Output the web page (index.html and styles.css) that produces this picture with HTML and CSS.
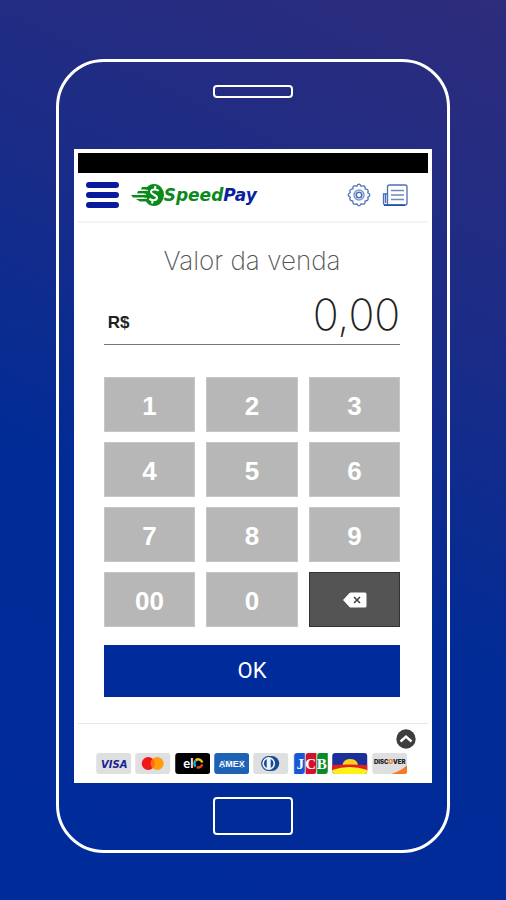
FILE: index.html
```html
<!DOCTYPE html>
<html lang="pt-BR">
<head>
  <meta charset="UTF-8" />
  <meta name="viewport" content="width=device-width, initial-scale=1" />
  <title>SpeedPay</title>
  <link rel="stylesheet" href="styles.css">
</head>
<body>

<div class="phone">
  <div class="speaker"></div>

  <div class="screen">
    <div class="status-bar"></div>

    <!-- Header -->
    <header class="header">
      <button class="menu" type="button" aria-label="Menu">
        <span></span><span></span><span></span>
      </button>
      <a class="logo" href="#home">
        <svg width="34" height="24" viewBox="0 0 34 24" aria-hidden="true">
          <path d="M12 4h10v2.500H11zM8 8h12v2.500H7zM1 12h15v2.500H3zM6 16h13v2.500H10z" fill="#0a8a1c"/>
          <ellipse cx="24" cy="12" rx="10" ry="11" fill="#0a8a1c"/>
          <path d="M13 7.300h5M9 11.300h7M11 15.300h6" stroke="#fff" stroke-width="1"/>
          <path d="M28.500 8c-1-2-7-2.500-7.500.5S27.500 12 27 15s-6.500 2.500-7.500.5M25.500 3l-.8 3.500M22.800 17l-.8 3.500" fill="none" stroke="#fff" stroke-width="2"/>
        </svg>
        <span class="speed">Speed</span><span class="pay">Pay</span>
      </a>
      <button class="icon" type="button" aria-label="Configurações">
        <svg width="24" height="24" viewBox="0 0 24 24" fill="none" stroke="#4a6fb8">
          <path d="M9.800 3.200Q12-.8 14.200 3.200Q18.600 1.700 18.100 5.900Q22.300 6.400 20.800 9.800Q24.800 12 20.800 14.200Q22.300 17.600 18.100 18.100Q18.600 22.300 14.200 20.800Q12 24.800 9.800 20.800Q5.400 22.300 5.900 18.100Q1.700 17.600 3.200 14.200Q-.8 12 3.200 9.800Q1.700 6.400 5.900 5.900Q5.400 1.700 9.800 3.200z" stroke-width="1.300"/>
          <circle cx="12" cy="12" r="5" stroke="#7f9ad0" stroke-width="1.500"/>
          <circle cx="12" cy="12" r="2.800" stroke-width="1.600"/>
        </svg>
      </button>
      <button class="icon" type="button" aria-label="Extrato">
        <svg width="26" height="24" viewBox="0 0 26 24" fill="none" stroke="#4a6fb8">
          <path d="M5.500 22V4q0-2 2-2H23q2 0 2 2v16q0 2-2 2H3.500q-2 0-2-2v-9H5" stroke-width="1.300"/>
          <path d="M2 22.200h21" stroke="#2452a8" stroke-width="1.600"/>
          <path d="M3.500 11v9" stroke-width="1.500"/>
          <path d="M9 7.500h13M9 12h13M9 16.500h13" stroke="#7088b8" stroke-width="1.500"/>
        </svg>
      </button>
    </header>

    <!-- Sale value -->
    <main class="sale">
      <h1>Valor da venda</h1>
      <div class="amount">
        <label for="amount">R$</label>
        <input id="amount" type="text" value="0,00" inputmode="decimal">
      </div>

      <div class="keypad">
        <button type="button">1</button>
        <button type="button">2</button>
        <button type="button">3</button>
        <button type="button">4</button>
        <button type="button">5</button>
        <button type="button">6</button>
        <button type="button">7</button>
        <button type="button">8</button>
        <button type="button">9</button>
        <button type="button">00</button>
        <button type="button">0</button>
        <button class="erase" type="button" aria-label="Apagar">
          <svg width="26" height="16" viewBox="0 0 26 16">
            <path d="M1 8l6.500-7q.6-.5 1.500-.5h14q1.500 0 1.500 1.500v12q0 1.500-1.500 1.500H9q-.9 0-1.500-.5z" fill="#fff"/>
            <path d="M12 5l6 6M18 5l-6 6" stroke="#444" stroke-width="1.600"/>
          </svg>
        </button>
      </div>

      <button class="ok" type="button">OK</button>
    </main>

    <!-- Accepted cards -->
    <footer class="footer">
      <button class="expand" type="button" aria-label="Expandir">
        <svg width="20" height="20" viewBox="0 0 20 20">
          <circle cx="10" cy="10" r="9.700" fill="#3e3e3e"/>
          <path d="M4.500 12.500l5.500-5 5.500 5" fill="none" stroke="#fff" stroke-width="2.400"/>
        </svg>
      </button>
      <div class="cards">
        <svg viewBox="0 0 35 21" role="img" aria-label="Visa">
          <rect width="35" height="21" rx="3" fill="#dedfe1"/>
          <text class="visa" x="18" y="15" text-anchor="middle">VISA</text>
        </svg>
        <svg viewBox="0 0 35 21" role="img" aria-label="Mastercard">
          <rect width="35" height="21" rx="3" fill="#dedfe1"/>
          <circle cx="13" cy="10.500" r="6.500" fill="#f01818"/>
          <circle cx="22" cy="10.500" r="6.500" fill="#ff9d0c"/>
          <path d="M17.500 5.800a6.500 6.500 0 0 1 0 9.400a6.500 6.500 0 0 1 0-9.400" fill="#ff6a0a"/>
        </svg>
        <svg viewBox="0 0 35 21" role="img" aria-label="Elo">
          <rect width="35" height="21" rx="3" fill="#000"/>
          <text class="elo" x="8" y="15">el</text>
          <g fill="none" stroke-width="2.400">
            <path d="M20.500 13.500a4 4 0 0 1 0-6" stroke="#2b9fd8"/>
            <path d="M20.500 7.300a4 4 0 0 1 6.500 2.200" stroke="#f5c518"/>
            <path d="M27 11.300a4 4 0 0 1-5.500 2.900" stroke="#e5452b"/>
          </g>
        </svg>
        <svg viewBox="0 0 35 21" role="img" aria-label="American Express">
          <rect width="35" height="21" rx="3" fill="#1d62b5"/>
          <path d="M7 7h22v8H5z" fill="#8bb3df"/>
          <text class="amex" x="17.500" y="14" text-anchor="middle">AMEX</text>
        </svg>
        <svg viewBox="0 0 35 21" role="img" aria-label="Diners Club">
          <rect width="35" height="21" rx="3" fill="#dedfe1"/>
          <path d="M14 3h4.500a7.500 7.500 0 0 1 0 15H14z" fill="#174a91"/>
          <circle cx="15.500" cy="10.500" r="7" fill="#eef2f7" stroke="#174a91" stroke-width="1.200"/>
          <path d="M13.500 6a5 5 0 0 0 0 9zM17.500 6a5 5 0 0 1 0 9z" fill="#174a91"/>
        </svg>
        <svg viewBox="0 0 35 21" role="img" aria-label="JCB">
          <rect width="35" height="21" rx="3" fill="#dedfe1"/>
          <path d="M4 0h7.500v18q0 3-3 3H1V3q0-3 3-3z" fill="#1557d8"/>
          <path d="M15.500 0H23v18q0 3-3 3h-7.500V3q0-3 3-3z" fill="#d3112b"/>
          <path d="M27 0h7.500v18q0 3-3 3H24V3q0-3 3-3z" fill="#078a29"/>
          <text class="jcb" x="7" y="16" text-anchor="middle">J</text>
          <text class="jcb" x="17.500" y="16" text-anchor="middle">C</text>
          <text class="jcb" x="28.500" y="16" text-anchor="middle">B</text>
        </svg>
        <svg viewBox="0 0 35 21" role="img" aria-label="Aura">
          <rect width="35" height="21" rx="3" fill="#1d2f9b"/>
          <path d="M10 13q1-7 8-7t8 7z" fill="#ffd21a"/>
          <path d="M0 12q17.500-1 35 0v5H0z" fill="#e3201b"/>
          <path d="M0 17q17.500-6 35 0v1q0 3-3 3H3q-3 0-3-3z" fill="#fff01a"/>
        </svg>
        <svg viewBox="0 0 35 21" role="img" aria-label="Discover">
          <rect width="35" height="21" rx="3" fill="#dedfe1"/>
          <path d="M19 21q10-3 16-9v6q0 3-3 3z" fill="#f47a28"/>
          <text class="discover" x="17.500" y="11" text-anchor="middle">DISC<tspan fill="#f47a28">O</tspan>VER</text>
        </svg>
      </div>
    </footer>
  </div>

  <div class="home"></div>
</div>

</body>
</html>
```

FILE: styles.css
```css
* {
  box-sizing: border-box;
}
body {
  margin: 0;
  min-height: 100vh;
  padding: 59px 0 47px;
  font-family: "Liberation Sans", Arial, sans-serif;
  background: linear-gradient(205deg, #2e2c7b 0%, #1c2c86 30%, #002b96 60%, #002b9b 100%);
}
button {
  border: 0;
  padding: 0;
  background: none;
  font-family: inherit;
  cursor: pointer;
}
svg {
  display: block;
}

/* Phone */
.phone {
  display: flex;
  flex-direction: column;
  align-items: center;
  width: 78%;
  margin: 0 auto;
  padding: 23px 15px 15px;
  border: 3px solid #fff;
  border-radius: 48px;
}
.speaker,
.home {
  width: 80px;
  border: 2px solid #fff;
  border-radius: 4px;
}
.speaker {
  height: 13px;
  margin-bottom: 51px;
}
.home {
  height: 38px;
  margin-top: 14px;
}
.screen {
  width: 100%;
  border: 4px solid #fff;
  background: #fff;
}
.status-bar {
  height: 20px;
  background: #000;
}

/* Header */
.header {
  display: flex;
  align-items: center;
  gap: 11px;
  height: 50px;
  padding: 0 20px 4px 8px;
  border-bottom: 2px solid #f4f4f4;
}
.menu {
  display: flex;
  flex-direction: column;
  gap: 4px;
  width: 33px;
}
.menu span {
  height: 6px;
  border-radius: 3px;
  background: #0a1a9c;
}
.logo {
  display: flex;
  align-items: center;
  margin-right: auto;
  font: italic bold 17px/24px "DejaVu Sans", sans-serif;
  text-decoration: none;
}
.speed {
  color: #0a8a1c;
}
.pay {
  color: #0a1f9c;
}

/* Sale */
.sale {
  padding: 22px 28px 26px 26px;
}
.sale h1 {
  margin: 0 0 13px;
  color: #555;
  font: 200 26px/32px Inter, sans-serif;
  text-align: center;
}
.amount {
  display: flex;
  align-items: flex-end;
  height: 55px;
  border-bottom: 1px solid #777;
}
.amount label {
  padding: 0 0 11px 4px;
  color: #222;
  font: bold 17px/20px "Liberation Sans", Arial, sans-serif;
}
.amount input {
  flex: 1;
  min-width: 0;
  height: 54px;
  padding: 0 0 6px;
  border: 0;
  background: none;
  color: #222;
  font: 200 43px/48px Inter, sans-serif;
  text-align: right;
  outline: none;
}
.keypad {
  display: grid;
  grid-template-columns: repeat(3, 1fr);
  grid-auto-rows: 55px;
  gap: 10px 11px;
  margin-top: 32px;
}
.keypad button {
  display: flex;
  align-items: center;
  justify-content: center;
  padding-top: 3px;
  border: 1px solid #c6c6c6;
  background: #b7b7b7;
  color: #fff;
  font-size: 26px;
  font-weight: bold;
}
.keypad .erase {
  padding-top: 0;
  border-color: #333;
  background: #545454;
}
.ok {
  display: block;
  width: 100%;
  height: 52px;
  margin-top: 18px;
  background: #002b9b;
  color: #fff;
  font: 22px/52px Roboto, sans-serif;
}

/* Cards */
.footer {
  display: flex;
  flex-direction: column;
  gap: 4px;
  padding: 5px 12px 5px 18px;
  border-top: 1px solid #e6e6e6;
}
.expand {
  align-self: flex-end;
}
.cards {
  display: grid;
  grid-template-columns: repeat(8, 1fr);
  gap: 4px;
  margin-right: 9px;
}
.cards svg {
  width: 100%;
  height: 21px;
}
.visa {
  fill: #1a1f8f;
  font: italic bold 10px "DejaVu Sans", sans-serif;
}
.elo {
  fill: #fff;
  font: bold 13px Lato, sans-serif;
}
.amex {
  fill: #fff;
  stroke: #1d62b5;
  stroke-width: 2px;
  paint-order: stroke;
  font: bold 9px "Liberation Sans", sans-serif;
}
.jcb {
  fill: #fff;
  font: bold 15px "Liberation Serif", serif;
}
.discover {
  fill: #222;
  font: 900 6px Inter, sans-serif;
}
```
